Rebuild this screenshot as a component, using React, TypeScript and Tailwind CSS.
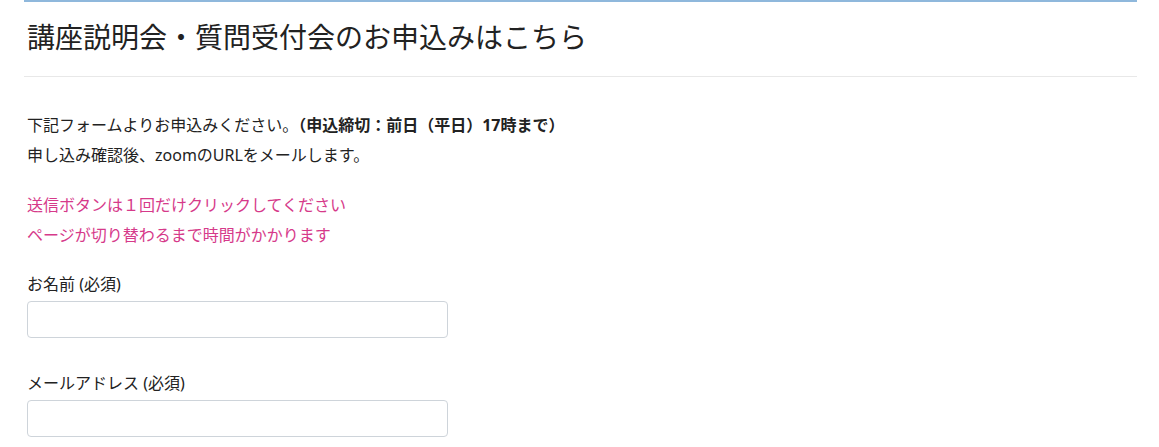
export default function App() {
  return (
    <div
      className="min-h-screen bg-white text-[#222]"
      style={{ fontFamily: '"Noto Sans", "Noto Sans CJK JP", sans-serif' }}
    >
      <div className="ml-[24px] mr-[22px] border-t-2 border-[#8fb8dc]">
        <h1 className="pt-[16px] pb-[20px] pl-[3px] text-[28px] leading-[38px] text-[#222] border-b border-[#e8e8e8]">
          講座説明会・質問受付会のお申込みはこちら
        </h1>

        <div className="pt-[33px] pl-[3px] text-[16px] leading-[30px]">
          <p>
            下記フォームよりお申込みください。<b className="font-bold">（申込締切：前日（平日）17時まで）</b>
          </p>
          <p>申し込み確認後、zoomのURLをメールします。</p>

          <div className="mt-[20px] text-[#d63a8a]">
            <p>送信ボタンは１回だけクリックしてください</p>
            <p>ページが切り替わるまで時間がかかります</p>
          </div>

          <form className="mt-[22px] flex flex-col leading-[24px]">
            <label className="flex flex-col">
              <span>お名前 (必須)</span>
              <input
                type="text"
                className="mt-[5px] w-[421px] h-[37px] rounded-[4px] border border-[#ced4da] bg-white px-3 outline-none"
              />
            </label>
            <label className="mt-[33px] flex flex-col">
              <span>メールアドレス (必須)</span>
              <input
                type="email"
                className="mt-[5px] w-[421px] h-[37px] rounded-[4px] border border-[#ced4da] bg-white px-3 outline-none"
              />
            </label>
          </form>
        </div>
      </div>
    </div>
  );
}
